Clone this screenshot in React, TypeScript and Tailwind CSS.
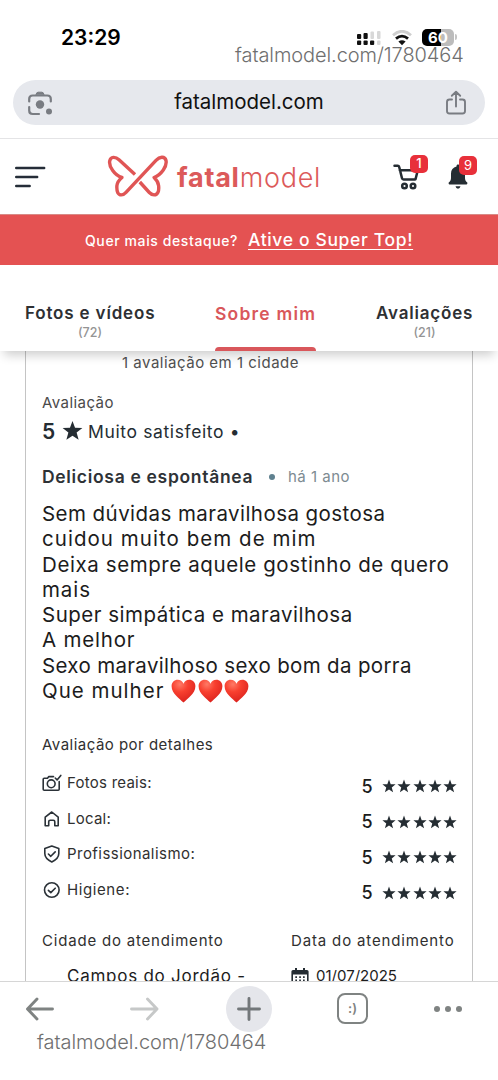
import { ReactNode } from "react";

interface Tab {
  label: string;
  count?: string;
  active?: boolean;
  className: string;
}

interface Detail {
  label: string;
  icon: ReactNode;
  score: number;
  className: string;
}

const STAR = "M12 1l2.9 7.9 8.400.300-6.600 5.200 2.300 8.100L12 17.900l-7 4.600 2.300-8.100L.7 9.200l8.400-.3z";

const tabs: Tab[] = [
  { label: "Fotos e vídeos", count: "(72)", className: "w-[130px] text-[17px] tracking-[0.83px]" },
  { label: "Sobre mim", active: true, className: "w-[101px] text-[17.5px] tracking-[1.2px]" },
  { label: "Avaliações", count: "(21)", className: "w-[97px] text-[17px] tracking-[0.8px]" },
];

const reviewLines = [
  { text: "Sem dúvidas maravilhosa gostosa", className: "tracking-[0.44px]" },
  { text: "cuidou muito bem de mim", className: "tracking-[1.04px]" },
  { text: "Deixa sempre aquele gostinho de quero", className: "tracking-[0.59px]" },
  { text: "mais", className: "tracking-[0.9px]" },
  { text: "Super simpática e maravilhosa", className: "tracking-[0.49px]" },
  { text: "A melhor", className: "tracking-[0.8px]" },
  { text: "Sexo maravilhoso sexo bom da porra", className: "tracking-[0.34px]" },
];

const CameraIcon = () => (
  <svg className="h-[18px] w-5" viewBox="0 0 20 18" fill="none" stroke="#2b3238" strokeWidth="1.6" strokeLinecap="round" strokeLinejoin="round">
    <path d="M11.5 2.600H6.800L5.500 4.200H2.200Q1.200 4.200 1.200 5.200v10q0 1 1 1h14q1 0 1-1V7.500" />
    <circle cx="9.2" cy="9.8" r="3.9" />
    <path d="M13.200 4l1.900 1.900L18.800 1.400" />
  </svg>
);

const HomeIcon = () => (
  <svg className="h-[18px] w-5" viewBox="0 0 20 18" fill="none" stroke="#2b3238" strokeWidth="1.6" strokeLinejoin="round">
    <path d="M3.200 7.200L9.800 2l6.400 5.200v8.600h-3.400v-4q0-1.500-1.500-1.500H8.200q-1.500 0-1.500 1.500v4H3.200z" />
  </svg>
);

const ShieldIcon = () => (
  <svg className="h-[18px] w-5" viewBox="0 0 20 18" fill="none" stroke="#2b3238" strokeWidth="1.6" strokeLinecap="round" strokeLinejoin="round">
    <path d="M9.800 1.100l7 2.400v5q0 5-7 8.500-7-3.500-7-8.500v-5z" />
    <path d="M6.400 9l2.400 2.300 4.400-4.400" />
  </svg>
);

const CheckIcon = () => (
  <svg className="h-[18px] w-5" viewBox="0 0 20 18" fill="none" stroke="#2b3238" strokeWidth="1.6" strokeLinecap="round" strokeLinejoin="round">
    <circle cx="9.800" cy="9" r="7.300" />
    <path d="M6.400 9.300l2.400 2.300 4.400-4.400" />
  </svg>
);

const details: Detail[] = [
  { label: "Fotos reais:", icon: <CameraIcon />, score: 5, className: "tracking-[0.25px]" },
  { label: "Local:", icon: <HomeIcon />, score: 5, className: "tracking-[0.25px]" },
  { label: "Profissionalismo:", icon: <ShieldIcon />, score: 5, className: "tracking-[0.45px]" },
  { label: "Higiene:", icon: <CheckIcon />, score: 5, className: "tracking-[0.6px]" },
];

const Star = ({ className }: { className: string }) => (
  <svg className={className} viewBox="0 0 24 24" fill="#252d33">
    <path d={STAR} />
  </svg>
);

const Heart = () => (
  <svg className="h-6 w-[25px]" viewBox="0 0 25 24">
    <defs>
      <radialGradient id="heart" cx="0.35" cy="0.2" r="0.85">
        <stop offset="0" stopColor="#ff7a66" />
        <stop offset="0.4" stopColor="#f8402f" />
        <stop offset="1" stopColor="#d9201c" />
      </radialGradient>
    </defs>
    <path
      d="M12.5 23.5C9 20 .6 14.5.6 7.2.6 3.2 3.4.7 6.7.7c2.600 0 4.800 1.400 5.800 4 1-2.600 3.200-4 5.800-4 3.300 0 6.100 2.500 6.100 6.500 0 7.300-8.400 12.800-11.900 16.300z"
      fill="url(#heart)"
    />
  </svg>
);

const StatusBar = () => (
  <div className="relative flex h-20 shrink-0 justify-between pt-[27px] pr-[41px] pl-[61px]">
    <span className="mt-px h-5 text-[21px] leading-5 font-semibold text-black">23:29</span>
    <div className="flex h-5 items-center">
      <svg className="mt-1 mr-2.5 h-4 w-[26px]" viewBox="0 0 26 16" fill="#111">
        <rect x="1" y="3" width="4.200" height="5" rx="1" />
        <rect x="7.500" y="2" width="4.200" height="6" rx="1" />
        <rect x="14.500" y="0.500" width="3.500" height="7.500" rx="1" fill="#d8d8d8" />
        <rect x="21" y="0" width="3.500" height="8" rx="1" fill="#d8d8d8" />
        <rect x="1" y="9.500" width="4.200" height="4.500" rx="1" />
        <rect x="7.500" y="9.500" width="4.200" height="4.500" rx="1" />
        <rect x="14" y="9.500" width="4.200" height="4.500" rx="1" />
        <rect x="21" y="9.500" width="3.500" height="4.500" rx="1" fill="#d8d8d8" />
      </svg>
      <svg className="mt-0.5 mr-2.5 h-4 w-5" viewBox="0 0 20 16" fill="none" strokeWidth="2.800">
        <path d="M1 5.200Q10-2.600 19 5.200" stroke="#cfcfcf" />
        <path d="M4 8.600Q10 3.600 16 8.600" stroke="#111" />
        <path d="M10 15.300l-3.600-3.700q3.600-2.700 7.200 0z" fill="#111" />
      </svg>
      <div className="flex h-[17px] w-[32px] items-center justify-center rounded-[5px] bg-linear-to-r from-black from-60% to-[#bcbcbc] to-60% text-[15px] leading-none font-bold text-white">
        60
      </div>
      <div className="ml-px h-1.5 w-0.5 rounded-r bg-[#c4c4c4]" />
    </div>
    <span className="absolute top-[43px] left-[235px] text-[20px] leading-6 font-light tracking-[-0.08px] text-[#6f6f6f]">
      fatalmodel.com/1780464
    </span>
  </div>
);

const AddressBar = () => (
  <div className="h-[59px] shrink-0 border-b border-[#e4e4e6] px-[13px]">
    <div className="flex h-[45px] items-center justify-between rounded-full bg-[#e6e8ed] pr-[18px] pl-[14px]">
      <svg className="h-[26px] w-[26px]" viewBox="0 0 26 26" fill="none" stroke="#797c82" strokeWidth="2.200" strokeLinecap="round">
        <path d="M2.200 11.500V9q0-3.500 3.500-3.500h14.600q3.500 0 3.500 3.500v2.500M2.200 17v3.500Q2.200 24 5.700 24H12" />
        <path d="M9 4.500Q9.500 2.200 11 2.200h4q1.500 0 2 2.300z" fill="#797c82" strokeWidth="1" />
        <circle cx="13" cy="14.500" r="4.200" fill="#797c82" stroke="none" />
        <circle cx="22" cy="21.500" r="3" fill="#797c82" stroke="none" />
      </svg>
      <span className="-mt-px text-[20.500px] text-[#111]">fatalmodel.com</span>
      <svg className="h-[26px] w-[22px]" viewBox="0 0 22 26" fill="none" stroke="#797c82" strokeWidth="1.900" strokeLinecap="round" strokeLinejoin="round">
        <path d="M7 9.500H4.500Q2 9.500 2 12v9q0 2.500 2.500 2.500h13q2.500 0 2.500-2.500v-9q0-2.500-2.500-2.500H15M11 16.500V2M6.800 5.800L11 1.800l4.200 4" />
      </svg>
    </div>
  </div>
);

const Header = () => (
  <header className="flex h-[75px] shrink-0 items-center pr-[21px] pl-[15px]">
    <svg className="h-[22px] w-[31px]" viewBox="0 0 31 22" stroke="#252d38" strokeWidth="2.400" strokeLinecap="round">
      <path d="M1.200 2h28M1.200 11h21M1.200 20h13.500" />
    </svg>
    <svg className="-mt-0.5 ml-[61px] h-[42px] w-[61px]" viewBox="0 0 61 42" fill="none" stroke="#e05555" strokeWidth="3.400" strokeLinejoin="round">
      <path d="M28 19.600L12 4.800C8.500 1.500 3.600 1.300 2.700 6c-.5 3 .7 6.500 3 9.500 2.300 3.200 5 5.800 9.200 7-2.900 2.500-4.700 5-5 8.200-.200 2.800.100 5.300.9 7 1.600 3 5.200 3 8.200-.3L49 5.300c3.500-3.700 8.800-4.600 10 .2.600 3-.7 6.700-2.700 9.500-2.300 3.300-5 6-9.200 7.500 2.700 2.500 4.200 5.200 4.500 8.200.300 2.500.100 5-.6 6.500-1.600 3.500-5.700 3.500-8.700.3L32.800 27" />
    </svg>
    <div className="mt-0.5 ml-[9px] w-[145px] text-[27px] leading-8 tracking-[0.750px] whitespace-nowrap text-[#dc5a5a]">
      <span className="font-bold">fatal</span>
      <span className="font-light">model</span>
    </div>
    <div className="ml-auto flex items-center gap-[28px]">
      <div className="relative">
        <svg className="h-[26px] w-[27px]" viewBox="0 0 27 26" fill="none" stroke="#252d33" strokeWidth="2.500" strokeLinecap="round" strokeLinejoin="round">
          <path d="M1.500 1.800h3.200q1.200 0 1.500 1.200L9 14.300q.300 1.200 1.500 1.200h11.500M6.800 6.200h18l-2.300 9" />
          <circle cx="11.500" cy="22" r="2.300" />
          <circle cx="20" cy="22" r="2.300" />
        </svg>
        <span className="absolute -top-[9px] left-[17px] flex h-[18px] w-[18px] items-center justify-center rounded-[5px] bg-[#e8303a] text-[13px] leading-none font-medium text-white">
          1
        </span>
      </div>
      <div className="relative mr-[9px]">
        <svg className="h-[26px] w-[20px]" viewBox="0 0 20 26" fill="#252d33">
          <path d="M10 .5c.9 0 1.500.600 1.500 1.500v.6C15 3.500 17 6.300 17 9.500v4.500c0 2 .700 3.200 2 4.200.8.600.400 2.300-.6 2.300H1.600C.6 20.500.2 18.800 1 18.200c1.300-1 2-2.200 2-4.200v-4.500C3 6.300 5 3.500 8.500 2.600V2c0-.9.600-1.500 1.500-1.500zM7.500 22.300h5q-.5 2.400-2.500 2.400t-2.500-2.400z" />
        </svg>
        <span className="absolute -top-[8px] left-[11px] flex h-[19px] w-[18px] items-center justify-center rounded-[5px] bg-[#e8303a] text-[13px] leading-none text-white">
          9
        </span>
      </div>
    </div>
  </header>
);

const Banner = () => (
  <div className="flex h-[51px] shrink-0 items-center border-t border-[#d88a86] bg-[#e45252] pl-[85px] whitespace-nowrap text-white">
    <span className="w-[163px] text-[14px] font-medium tracking-[0.600px]">Quer mais destaque?</span>
    <span className="mt-px text-[17.500px] font-medium tracking-[0.650px] underline decoration-1 underline-offset-[3px]">Ative o Super Top!</span>
  </div>
);

const Tabs = () => (
  <nav className="relative z-10 flex h-[86px] shrink-0 justify-between bg-white pr-[25px] pl-[25px] shadow-[0_8px_10px_-4px_rgba(0,0,0,0.2)]">
    {tabs.map((tab) => (
      <div key={tab.label} className="flex flex-col items-center pt-[37px] whitespace-nowrap">
        <span className={`${tab.className} leading-[23px] font-semibold ${tab.active ? "text-[#d9575b]" : "text-[#2e3033]"}`}>
          {tab.label}
        </span>
        {tab.count && <span className="text-[12.500px] leading-4 font-medium text-[#949494]">{tab.count}</span>}
        {tab.active && <div className="mt-auto h-1 w-[101px] rounded-t bg-[#d9575b]" />}
      </div>
    ))}
  </nav>
);

const Review = () => (
  <main className="h-[630px] shrink-0 overflow-hidden pr-[25px] pl-[25px]">
    <article className="h-[660px] border-x border-[#c4c4c4] pl-4 whitespace-nowrap">
      <p className="pt-px pl-20 text-[15px] leading-[22px] tracking-[0.500px] text-[#505050]">1 avaliação em 1 cidade</p>
      <p className="mt-[19px] text-[15px] leading-5 tracking-[0.430px] text-[#4a4a4a]">Avaliação</p>
      <div className="mt-[5px] flex h-[28px] items-center text-[#252d33]">
        <span className="w-5 text-[21px] font-semibold">5</span>
        <Star className="-mt-1 h-[21px] w-[21px]" />
        <span className="mt-px ml-[5px] text-[17.500px] tracking-[0.630px]">Muito satisfeito •</span>
      </div>
      <div className="mt-[19px] flex h-6 items-center">
        <span className="w-[227px] text-[17.500px] font-semibold tracking-[0.680px] text-[#2e3236]">Deliciosa e espontânea</span>
        <span className="h-1.5 w-1.5 rounded-full bg-[#5f818f]" />
        <span className="ml-[13px] text-[15px] tracking-[0.500px] text-[#7d8b92]">há 1 ano</span>
      </div>
      <div className="mt-3 text-[20.500px] leading-[25.300px] text-[#1c1c1c]">
        {reviewLines.map((line) => (
          <p key={line.text} className={line.className}>
            {line.text}
          </p>
        ))}
        <div className="flex items-center">
          <span className="w-[129px] tracking-[1px]">Que mulher</span>
          <div className="flex gap-[1.500px]">
            <Heart />
            <Heart />
            <Heart />
          </div>
        </div>
      </div>
      <p className="mt-8 text-[15px] leading-5 tracking-[0.480px] text-[#303030]">Avaliação por detalhes</p>
      <ul className="mt-[11px]">
        {details.map((detail) => (
          <li key={detail.label} className="flex h-[35.600px] items-center pr-[15px]">
            <span className="mt-[-2px] w-[25px]">{detail.icon}</span>
            <span className={`${detail.className} mt-[-2px] text-[15px] text-[#303030]`}>{detail.label}</span>
            <span className="mt-1 ml-auto text-[18px] font-medium text-[#1c1c1c]">{detail.score}</span>
            <span className="mt-1 ml-[9.500px] flex gap-[1.200px]">
              {Array.from({ length: detail.score }, (_, i) => (
                <Star key={i} className="h-3.5 w-3.5" />
              ))}
            </span>
          </li>
        ))}
      </ul>
      <div className="mt-[22px] flex">
        <div className="w-[249px]">
          <p className="text-[15px] leading-5 tracking-[0.800px] text-[#303030]">Cidade do atendimento</p>
          <p className="mt-[13px] pl-[25px] text-[17px] leading-6 tracking-[0.750px] text-[#1c1c1c]">Campos do Jordão -</p>
        </div>
        <div>
          <p className="text-[15px] leading-5 tracking-[0.850px] text-[#303030]">Data do atendimento</p>
          <div className="mt-[13px] flex h-6 items-center">
            <svg className="mt-0.5 h-[18px] w-[18px]" viewBox="0 0 18 18" fill="#252d33">
              <path fillRule="evenodd" d="M4 0h2v2h6V0h2v2h2q1.600 0 1.600 1.600V18H.4V3.600Q.4 2 2 2h2zM2 6.500V18h14V6.500z" />
              <path d="M4.300 8.300h1.700v1.700H4.300zM8.200 8.300h1.700v1.700H8.200zM12 8.300h1.700v1.700H12zM4.300 11.500h1.700v1.700H4.300zM8.200 11.500h1.700v1.700H8.200zM12 11.500h1.700v1.700H12z" />
            </svg>
            <span className="ml-[7px] text-[15px] text-[#1c1c1c]">01/07/2025</span>
          </div>
        </div>
      </div>
    </article>
  </main>
);

const BottomBar = () => (
  <footer className="relative z-10 flex h-[99px] shrink-0 items-start border-t border-[#d6d6d6] bg-white pl-[25px]">
    <svg className="mt-[13px] h-7 w-[30px]" viewBox="0 0 30 28" fill="none" stroke="#7f8382" strokeWidth="2.900" strokeLinecap="round" strokeLinejoin="round">
      <path d="M27.500 14H3M12 4L2.500 14l9.500 10" />
    </svg>
    <svg className="mt-[13px] ml-[75px] h-7 w-[30px]" viewBox="0 0 30 28" fill="none" stroke="#c6c8c8" strokeWidth="2.900" strokeLinecap="round" strokeLinejoin="round">
      <path d="M1.500 14H27M17.500 4L27 14l-9.500 10" />
    </svg>
    <div className="mt-[4px] ml-[66px] flex h-[46px] w-[46px] items-center justify-center rounded-full bg-[#e5e6eb]">
      <svg className="h-6 w-6" viewBox="0 0 24 24" stroke="#73777a" strokeWidth="2.900" strokeLinecap="round">
        <path d="M12 1.500v21M1.500 12h21" />
      </svg>
    </div>
    <div className="mt-[11px] ml-[65px] flex h-[31px] w-[31px] items-center justify-center rounded-lg border-2 border-[#7f8382] text-[13px] leading-none font-semibold text-[#7f8382]">
      :)
    </div>
    <svg className="mt-[23px] ml-[65px] h-2 w-[30px]" viewBox="0 0 30 8" fill="#7f8382">
      <circle cx="4" cy="4" r="3" />
      <circle cx="15" cy="4" r="3" />
      <circle cx="26" cy="4" r="3" />
    </svg>
    <span className="absolute top-[48px] left-[37px] text-[20px] leading-6 font-light tracking-[-0.060px] text-[#6f6f6f]">
      fatalmodel.com/1780464
    </span>
  </footer>
);

export default function App() {
  return (
    <div className="flex h-[1080px] w-[498px] flex-col overflow-hidden bg-white font-['Inter','Liberation_Sans',sans-serif]">
      <StatusBar />
      <AddressBar />
      <Header />
      <Banner />
      <Tabs />
      <Review />
      <BottomBar />
    </div>
  );
}
